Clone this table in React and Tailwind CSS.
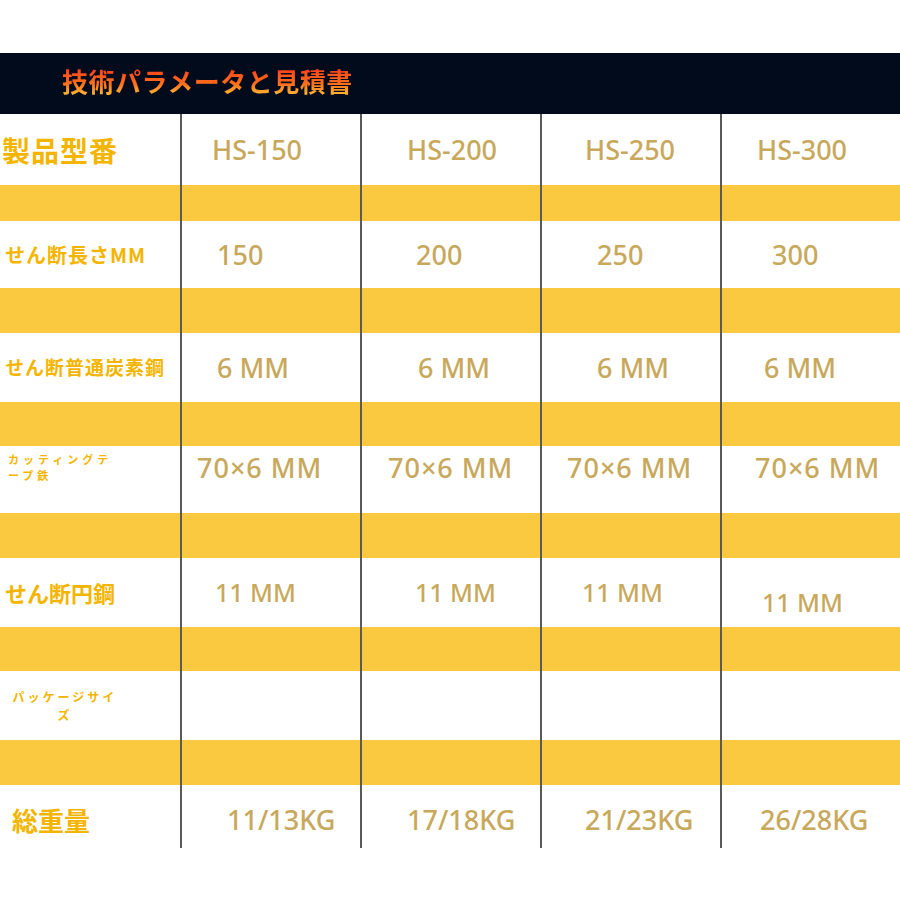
const SPEC = [
  {
    label: "製品型番",
    labelCls: "text-[28px] font-bold pl-[2px] tracking-[1px]",
    values: ["HS-150", "HS-200", "HS-250", "HS-300"],
    pads: ["pl-[30px]", "pl-[45px]", "pl-[43px]", "pl-[35px]"],
    h: "h-[71px]",
    stripe: "h-[36px]",
    valueCls: "text-[27px]",
  },
  {
    label: "せん断長さMM",
    labelCls: "text-[20px] font-bold pl-[5px] tracking-[1px]",
    values: ["150", "200", "250", "300"],
    pads: ["pl-[35px]", "pl-[54px]", "pl-[55px]", "pl-[50px]"],
    h: "h-[67px]",
    stripe: "h-[45px]",
    valueCls: "text-[27px]",
  },
  {
    label: "せん断普通炭素鋼",
    labelCls: "text-[19px] font-bold pl-[5px] tracking-[1px]",
    values: ["6 MM", "6 MM", "6 MM", "6 MM"],
    pads: ["pl-[35px]", "pl-[56px]", "pl-[55px]", "pl-[42px]"],
    h: "h-[69px]",
    stripe: "h-[44px]",
    valueCls: "text-[27px]",
  },
  {
    label: (
      <>
        カッティングテ
        <br />
        ープ鉄
      </>
    ),
    labelCls: "text-[11px] font-bold pl-[8px] tracking-[4px] leading-[16px] self-start pt-[5px]",
    values: ["70×6 MM", "70×6 MM", "70×6 MM", "70×6 MM"],
    pads: ["pl-[15px]", "pl-[26px]", "pl-[25px]", "pl-[33px]"],
    h: "h-[67px]",
    stripe: "h-[45px]",
    valueCls: "text-[27px] tracking-[1px] self-start pt-[8px]",
  },
  {
    label: "せん断円鋼",
    labelCls: "text-[22px] font-bold pl-[5px]",
    values: ["11 MM", "11 MM", "11 MM", "11 MM"],
    pads: ["pl-[33px]", "pl-[53px]", "pl-[40px]", "pl-[40px] pt-[20px]"],
    h: "h-[69px]",
    stripe: "h-[44px]",
    valueCls: "text-[25px]",
  },
  {
    label: (
      <span className="block text-center w-[120px]">
        パッケージサイ
        <br />
        ズ
      </span>
    ),
    labelCls: "text-[12px] font-bold pl-[5px] tracking-[3px] leading-[18px]",
    values: ["", "", "", ""],
    pads: ["", "", "", ""],
    h: "h-[69px]",
    stripe: "h-[45px]",
    valueCls: "text-[27px]",
  },
  {
    label: "総重量",
    labelCls: "text-[26px] font-bold pl-[12px] pt-[6px]",
    values: ["11/13KG", "17/18KG", "21/23KG", "26/28KG"],
    pads: ["pl-[45px] pt-[6px]", "pl-[45px] pt-[6px]", "pl-[43px] pt-[6px]", "pl-[38px] pt-[6px]"],
    h: "h-[63px]",
    stripe: null,
    valueCls: "text-[27px]",
  },
];

const CELL = "w-[180px] shrink-0 flex items-center";
const LINE = "border-l-2 border-[#5a5a5a]";

function Row({ row }) {
  return (
    <>
      <div className={`flex bg-white ${row.h}`}>
        <div
          className={`${CELL} text-[#f4b500] ${row.labelCls}`}
          style={{ fontFamily: '"Noto Sans CJK JP", "Noto Sans", sans-serif' }}
        >
          <span>{row.label}</span>
        </div>
        {row.values.map((v, i) => (
          <div key={i} className={`${CELL} ${LINE}`}>
            <span
              className={`text-[#c8a85b] font-medium leading-none ${row.valueCls} ${row.pads[i]}`}
              style={{ fontFamily: '"Noto Sans", sans-serif' }}
            >
              {v}
            </span>
          </div>
        ))}
      </div>
      {row.stripe && (
        <div className={`flex bg-[#fbc93f] ${row.stripe}`}>
          <div className="w-[180px] shrink-0" />
          {[0, 1, 2, 3].map((i) => (
            <div key={i} className={`w-[180px] shrink-0 ${LINE}`} />
          ))}
        </div>
      )}
    </>
  );
}

export default function App() {
  return (
    <div className="w-[900px] h-[900px] bg-white overflow-hidden flex flex-col">
      <div className="h-[53px] shrink-0" />

      {/* title bar */}
      <div className="h-[61px] shrink-0 bg-[#020b1c] flex items-center pl-[62px]">
        <span
          className="text-[26px] font-bold leading-none pb-[6px] tracking-[0.5px] bg-gradient-to-b from-[#ff3a1c] via-[#ff6f1a] to-[#ffd640] bg-clip-text text-transparent"
          style={{ fontFamily: '"Noto Sans CJK JP", sans-serif' }}
        >
          技術パラメータと見積書
        </span>
      </div>

      {/* spec table */}
      <div className="flex flex-col">
        {SPEC.map((row, i) => (
          <Row key={i} row={row} />
        ))}
      </div>
    </div>
  );
}
